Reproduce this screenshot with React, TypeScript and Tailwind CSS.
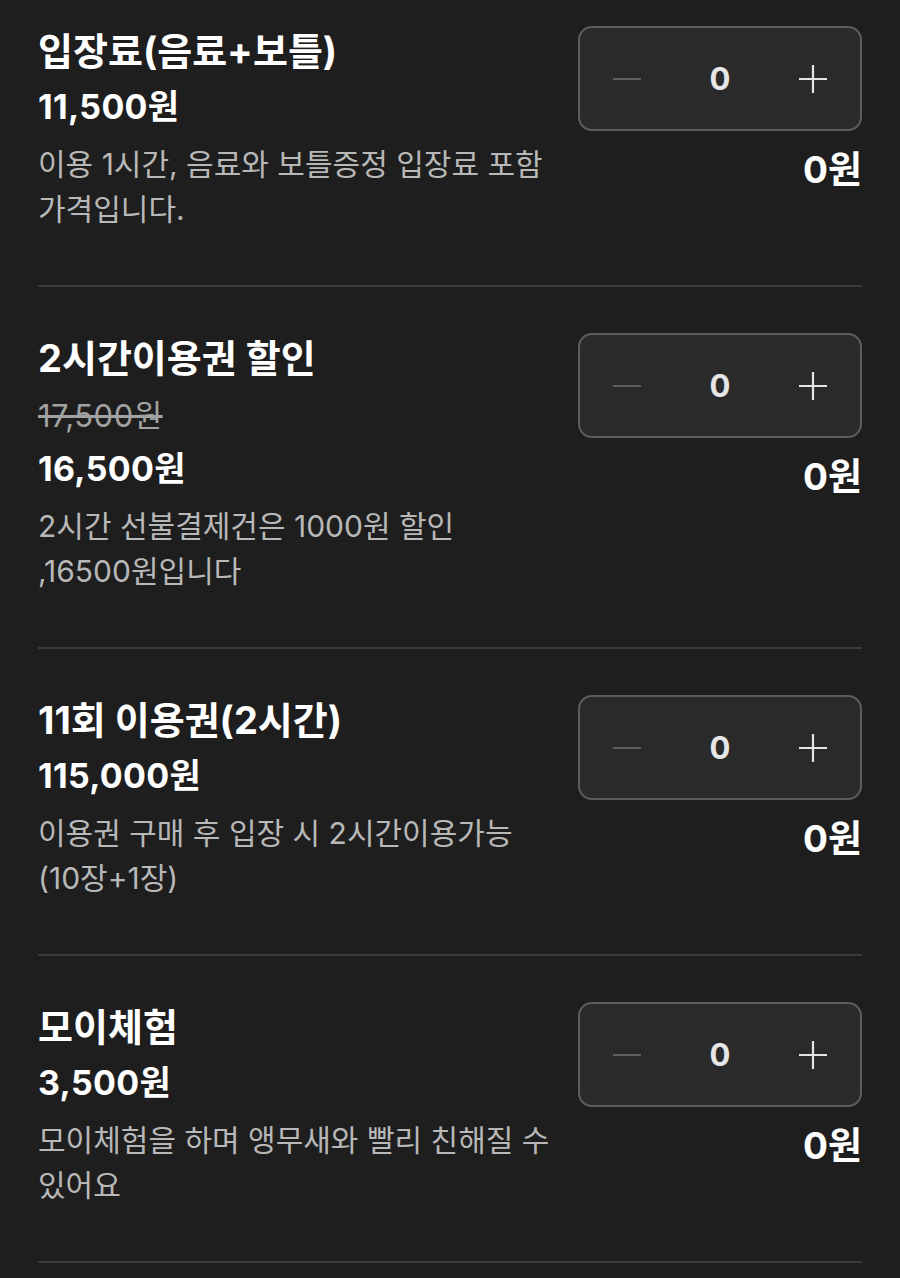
import { FC } from "react"

interface ITicket {
    title: string
    original?: string
    price: string
    desc: string
}

const tickets: ITicket[] = [
    { title: "입장료(음료+보틀)", price: "11,500원", desc: "이용 1시간, 음료와 보틀증정 입장료 포함 가격입니다." },
    { title: "2시간이용권 할인", original: "17,500원", price: "16,500원", desc: "2시간 선불결제건은 1000원 할인 ,16500원입니다" },
    { title: "11회 이용권(2시간)", price: "115,000원", desc: "이용권 구매 후 입장 시 2시간이용가능 (10장+1장)" },
    { title: "모이체험", price: "3,500원", desc: "모이체험을 하며 앵무새와 빨리 친해질 수 있어요" },
]

const Stepper: FC = () => (
    <div className="grid grid-cols-3 items-center h-[105px] rounded-[14px] border-2 border-[#5c5c5c] bg-[#2a2a2a]">
        <div className="flex justify-center">
            <div className="w-[28px] h-[2px] bg-[#5e5e5e]" />
        </div>
        <div className="text-center text-[31px] font-bold text-[#e6e6e6] leading-none">0</div>
        <div className="flex justify-center">
            <svg width="28" height="28" viewBox="0 0 28 28">
                <path d="M14 0v28M0 14h28" stroke="#e4e4e4" strokeWidth="2.2" />
            </svg>
        </div>
    </div>
)

const TicketRow: FC<{ item: ITicket; first: boolean }> = ({ item, first }) => (
    <div className={`flex border-b-2 border-[#3a3a3a] pb-[53px] ${first ? "pt-[26px]" : "pt-[46px]"}`}>
        <div className="flex-1 min-w-0 break-keep">
            <h2 className="text-[38px] leading-[50px] font-bold text-white">{item.title}</h2>
            {item.original && (
                <p className="mt-[10px] text-[31px] leading-[45px] tracking-[0.5px] text-[#a2a2a2] line-through">{item.original}</p>
            )}
            <p className="mt-[6px] text-[34px] leading-[50px] tracking-[0.3px] font-bold text-white">{item.price}</p>
            <p className="mt-[10px] text-[30px] leading-[45px] text-[#b8b8b8]">{item.desc}</p>
        </div>
        <div className="w-[284px] shrink-0">
            <Stepper />
            <p className="mt-[14px] text-right text-[37px] leading-[50px] font-bold text-white">0원</p>
        </div>
    </div>
)

export default function App() {
    return (
        <div className="min-h-[1278px] bg-[#1e1e1e] px-[38px] font-[Inter,'Noto_Sans_CJK_KR',sans-serif]">
            {tickets.map((t, i) => (
                <TicketRow key={t.title} item={t} first={i === 0} />
            ))}
        </div>
    )
}
